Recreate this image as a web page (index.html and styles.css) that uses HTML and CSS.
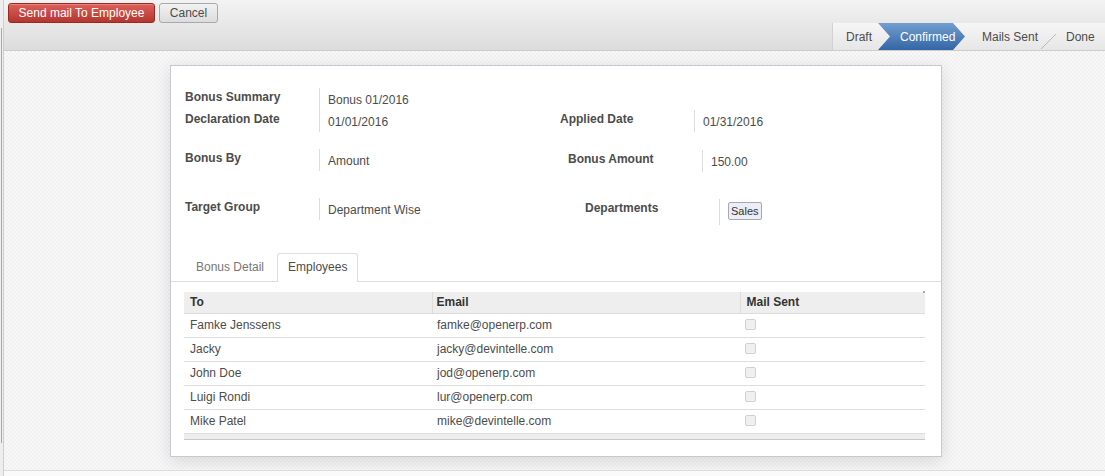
FILE: index.html
```html
<!DOCTYPE html>
<html>
<head>
<meta charset="utf-8">
<link rel="stylesheet" href="styles.css">
</head>
<body>
<div class="app">
  <div class="leftstrip"><div class="leftline"></div></div>
  <div class="main">
    <div class="topbar">
      <div class="buttons">
        <button class="btn btn-primary">Send mail To Employee</button>
        <button class="btn btn-default">Cancel</button>
      </div>
      <div class="statusbar">
        <div class="st st-draft">Draft</div>
        <div class="st st-active">Confirmed</div>
        <div class="st st-sent">Mails Sent</div>
        <svg class="st-sep" width="20" height="27" viewBox="0 0 20 27"><line x1="3" y1="26" x2="18" y2="11" stroke="#b9b9b9" stroke-width="1"/></svg>
        <div class="st st-done">Done</div>
      </div>
    </div>
    <div class="content">
      <div class="sheet">
        <div class="form">
          <div class="row row1">
            <div class="field left">
              <div class="lbls">
                <div class="lbl">Bonus Summary</div>
                <div class="lbl">Declaration Date</div>
              </div>
              <div class="vals">
                <div class="val">Bonus 01/2016</div>
                <div class="val">01/01/2016</div>
              </div>
            </div>
            <div class="right r1">
              <div class="field">
                <div class="lbls"><div class="lbl">Applied Date</div></div>
                <div class="vals"><div class="val">01/31/2016</div></div>
              </div>
            </div>
          </div>
          <div class="row row2">
            <div class="field left">
              <div class="lbls"><div class="lbl">Bonus By</div></div>
              <div class="vals"><div class="val">Amount</div></div>
            </div>
            <div class="right r2">
              <div class="field">
                <div class="lbls"><div class="lbl">Bonus Amount</div></div>
                <div class="vals"><div class="val">150.00</div></div>
              </div>
            </div>
          </div>
          <div class="row row3">
            <div class="field left">
              <div class="lbls"><div class="lbl">Target Group</div></div>
              <div class="vals"><div class="val">Department Wise</div></div>
            </div>
            <div class="right r3">
              <div class="field">
                <div class="lbls"><div class="lbl">Departments</div></div>
                <div class="vals tagvals"><span class="tag">Sales</span></div>
              </div>
            </div>
          </div>
        </div>
        <div class="tabs">
          <div class="tab">Bonus Detail</div>
          <div class="tab tab-active">Employees</div>
        </div>
        <div class="tabpane">
          <table class="grid">
            <thead>
              <tr><th class="c-to">To</th><th class="c-email">Email</th><th class="c-sent">Mail Sent</th></tr>
            </thead>
            <tbody>
              <tr><td>Famke Jenssens</td><td>famke@openerp.com</td><td><span class="chk"></span></td></tr>
              <tr><td>Jacky</td><td>jacky@devintelle.com</td><td><span class="chk"></span></td></tr>
              <tr><td>John Doe</td><td>jod@openerp.com</td><td><span class="chk"></span></td></tr>
              <tr><td>Luigi Rondi</td><td>lur@openerp.com</td><td><span class="chk"></span></td></tr>
              <tr><td>Mike Patel</td><td>mike@devintelle.com</td><td><span class="chk"></span></td></tr>
            </tbody>
            <tfoot>
              <tr><td colspan="3"></td></tr>
            </tfoot>
          </table>
        </div>
      </div>
    </div>
    <div class="footer"></div>
  </div>
</div>
</body>
</html>
```

FILE: styles.css
```css
html, body {
  margin: 0;
  padding: 0;
  height: 100%;
}
body {
  font-family: "Liberation Sans", Arial, sans-serif;
  font-size: 12px;
  color: #4c4c4c;
  background: #f8f8f8;
}
.app {
  display: flex;
  height: 476px;
  overflow: hidden;
}
.leftstrip {
  width: 3px;
  flex: 0 0 3px;
  background: #eeeeee;
  border-right: 1px solid #cfcfcf;
  position: relative;
}
.leftline {
  margin-top: 28px;
  margin-left: 1px;
  width: 1px;
  height: 415px;
  background: #a9a9a9;
}
.main {
  flex: 1;
  display: flex;
  flex-direction: column;
}
.topbar {
  height: 50px;
  border-bottom: 1px solid #cdcdcd;
  background: linear-gradient(#f3f3f3, #dcdcdc);
  display: flex;
  flex-direction: column;
}
.buttons {
  height: 23px;
  box-sizing: border-box;
  padding: 3px 0 0 4px;
  display: flex;
}
.btn {
  font-family: "Liberation Sans", Arial, sans-serif;
  font-size: 12px;
  height: 20px;
  border-radius: 3px;
  padding: 0;
  margin: 0;
  cursor: pointer;
}
.btn-primary {
  width: 147px;
  color: #ffffff;
  background: linear-gradient(#dc5f59, #b33630);
  border: 1px solid #9e2720;
  box-shadow: inset 0 1px 0 rgba(255,255,255,0.25);
}
.btn-default {
  width: 59px;
  margin-left: 4px;
  color: #4c4c4c;
  background: linear-gradient(#f2f2f2, #dcdcdc);
  border: 1px solid #a9a9a9;
}
.statusbar {
  height: 27px;
  margin-left: auto;
  display: flex;
  align-items: stretch;
  border-left: 1px solid #d2d2d2;
  background: linear-gradient(#f6f6f6, #e6e6e6);
}
.st {
  display: flex;
  align-items: center;
  color: #4c4c4c;
  white-space: nowrap;
}
.st-draft {
  padding: 0 7px 0 13px;
  width: 26px;
}
.st-active {
  margin-left: -1px;
  width: 55px;
  padding: 0 10px 0 22px;
  color: #ffffff;
  background: linear-gradient(#729fcf, #3465a4);
  clip-path: polygon(0 0, calc(100% - 12px) 0, 100% 50%, calc(100% - 12px) 100%, 0 100%, 12px 50%);
}
.st-sent {
  padding-left: 17px;
  width: 56px;
}
.st-sep {
  display: block;
  flex: 0 0 20px;
}
.st-done {
  padding: 0 10px 0 8px;
  width: 29px;
}
.content {
  height: 420px;
  padding-left: 3px;
  display: flex;
  justify-content: center;
  align-items: flex-start;
  background-color: #f5f5f5;
  background-image: repeating-conic-gradient(#f1f1f1 0 25%, #f8f8f8 0 50%);
  background-size: 4px 4px;
}
.sheet {
  margin-top: 14px;
  width: 772px;
  height: 392px;
  box-sizing: border-box;
  background: #ffffff;
  border: 1px solid #c8c8d3;
  box-shadow: 0 4px 16px rgba(0,0,0,0.12);
}
.form {
  padding: 22px 16px 0 14px;
  height: 187px;
  box-sizing: border-box;
}
.row {
  display: flex;
  align-items: flex-start;
}
.row2 { margin-top: 17px; }
.row3 { margin-top: 26px; }
.field {
  display: flex;
  align-items: stretch;
}
.field.left {
  width: 375px;
}
.r1 { padding-top: 22px; }
.r2 { padding-left: 8px; padding-top: 1px; }
.r3 { padding-left: 25px; padding-top: 1px; }
.lbls {
  width: 134px;
}
.lbl {
  height: 22px;
  box-sizing: border-box;
  padding-top: 1px;
  line-height: 16px;
  font-weight: bold;
  color: #4c4c4c;
  white-space: nowrap;
}
.vals {
  border-left: 1px solid #dcdcdc;
  padding-left: 8px;
}
.val {
  height: 22px;
  box-sizing: border-box;
  padding-top: 4px;
  line-height: 16px;
  white-space: nowrap;
}
.tagvals {
  height: 26px;
  box-sizing: border-box;
  padding-top: 3px;
}
.tag {
  display: inline-block;
  height: 18px;
  box-sizing: border-box;
  padding: 0 2px;
  line-height: 16px;
  font-size: 11px;
  color: #333;
  background: #ededf6;
  border: 1px solid #a7a7b6;
  border-radius: 2px;
}
.tabs {
  display: flex;
  padding-left: 14px;
  border-bottom: 1px solid #dddddd;
}
.tab {
  height: 27px;
  line-height: 27px;
  padding: 0 10px;
  margin-right: 2px;
  border: 1px solid transparent;
  border-bottom: none;
  color: #777777;
  border-radius: 3px 3px 0 0;
}
.tab-active {
  color: #4c4c4c;
  background: #ffffff;
  border-color: #dddddd;
  margin-bottom: -1px;
  height: 28px;
}
.tabpane {
  padding: 10px 16px 0 13px;
  position: relative;
}
.tabpane::after {
  content: "";
  position: absolute;
  right: 16px;
  top: 9px;
  width: 2px;
  height: 2px;
  background: #a8a8a8;
}
.grid {
  width: 741px;
  border-collapse: collapse;
  table-layout: fixed;
}
.grid th {
  height: 21px;
  box-sizing: border-box;
  text-align: left;
  font-weight: bold;
  color: #333333;
  background: #eeeeee;
  border-bottom: 1px solid #dddddd;
  padding: 0 6px;
}
.grid th.c-to { width: 248px; }
.grid th.c-email { width: 308px; border-left: 1px solid #dddddd; padding-left: 4px; }
.grid th.c-sent { border-left: 1px solid #dddddd; padding-left: 6px; }
.grid tbody td {
  height: 24px;
  box-sizing: border-box;
  padding: 0 6px;
  border-bottom: 1px solid #dddddd;
  color: #4c4c4c;
  white-space: nowrap;
}
.grid tbody td:nth-child(2) { padding-left: 5px; }
.grid tbody td:nth-child(3) { padding-left: 5px; vertical-align: top; padding-top: 5px; }
.chk {
  display: block;
  width: 9px;
  height: 9px;
  border: 1px solid #d0d0d0;
  border-radius: 2px;
  background: #f0f0f0;
}
.grid tfoot td {
  height: 5px;
  padding: 0;
  background: #eeeeee;
  border-top: 1px solid #cccccc;
  border-bottom: 1px solid #c8c8c8;
}
.footer {
  height: 5px;
  border-top: 1px solid #dddddd;
  background: #fafafa;
}
```
